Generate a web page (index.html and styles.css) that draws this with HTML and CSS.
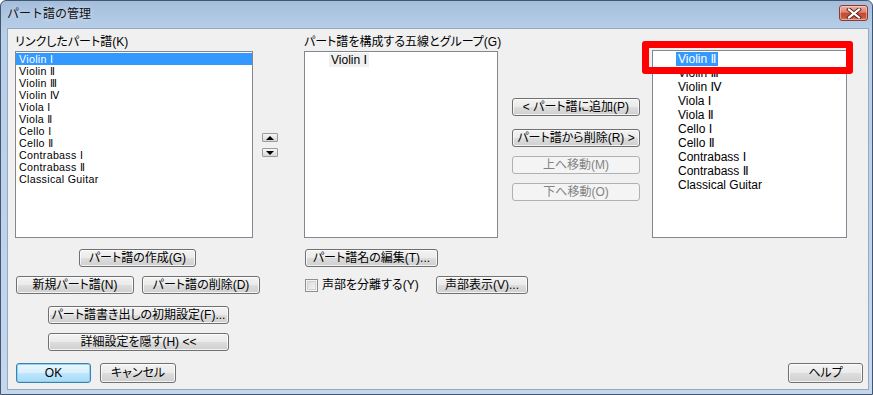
FILE: index.html
```html
<!DOCTYPE html>
<html lang="ja">
<head>
<meta charset="utf-8">
<title>パート譜の管理</title>
<link rel="stylesheet" href="styles.css">
</head>
<body>
<div class="window">
  <div class="titlebar">
    <span class="title">パート譜の管理</span>
    <div class="close">
      <svg width="16" height="11" viewBox="0 0 16 11">
        <path d="M3 1.5 L13 9.5 M13 1.5 L3 9.5" stroke="#5a2418" stroke-width="4" stroke-linecap="square" fill="none"/>
        <path d="M3 1.5 L13 9.5 M13 1.5 L3 9.5" stroke="#ffffff" stroke-width="2.2" stroke-linecap="square" fill="none"/>
      </svg>
    </div>
  </div>
  <div class="client">
    <div class="top">
      <div class="col-left">
        <div class="label">リンクしたパート譜(K)</div>
        <ul class="list list-left">
          <li class="sel">Violin <span class="rn">Ⅰ</span></li>
          <li>Violin <span class="rn">Ⅱ</span></li>
          <li>Violin <span class="rn">Ⅲ</span></li>
          <li>Violin <span class="rn">Ⅳ</span></li>
          <li>Viola <span class="rn">Ⅰ</span></li>
          <li>Viola <span class="rn">Ⅱ</span></li>
          <li>Cello <span class="rn">Ⅰ</span></li>
          <li>Cello <span class="rn">Ⅱ</span></li>
          <li>Contrabass <span class="rn">Ⅰ</span></li>
          <li>Contrabass <span class="rn">Ⅱ</span></li>
          <li>Classical Guitar</li>
        </ul>
      </div>
      <div class="updown">
        <span class="tiny up"></span>
        <span class="tiny down"></span>
      </div>
      <div class="col-mid">
        <div class="label">パート譜を構成する五線とグループ(G)</div>
        <ul class="list list-mid">
          <li><span class="inactive">Violin Ⅰ</span></li>
        </ul>
      </div>
      <div class="col-btns">
        <div class="btn add">&lt; パート譜に追加(P)</div>
        <div class="btn remove">パート譜から削除(R) &gt;</div>
        <div class="btn disabled move">上へ移動(M)</div>
        <div class="btn disabled move">下へ移動(O)</div>
      </div>
      <div class="col-right">
        <ul class="list list-right">
          <li><span class="sel">Violin Ⅱ</span></li>
          <li><span>Violin Ⅲ</span></li>
          <li><span>Violin Ⅳ</span></li>
          <li><span>Viola Ⅰ</span></li>
          <li><span>Viola Ⅱ</span></li>
          <li><span>Cello Ⅰ</span></li>
          <li><span>Cello Ⅱ</span></li>
          <li><span>Contrabass Ⅰ</span></li>
          <li><span>Contrabass Ⅱ</span></li>
          <li><span>Classical Guitar</span></li>
        </ul>
        <div class="mark"></div>
      </div>
    </div>
    <div class="bottom">
      <div class="left-actions">
        <div class="row r1"><div class="btn w117">パート譜の作成(G)</div></div>
        <div class="row r2"><div class="btn w118">新規パート譜(N)</div><div class="btn w118">パート譜の削除(D)</div></div>
        <div class="row r3"><div class="btn w181">パート譜書き出しの初期設定(F)...</div></div>
        <div class="row r4"><div class="btn w181">詳細設定を隠す(H) &lt;&lt;</div></div>
      </div>
      <div class="mid-actions">
        <div class="row"><div class="btn w133">パート譜名の編集(T)...</div></div>
        <div class="row r2 split">
          <label class="check"><span class="box"></span><span>声部を分離する(Y)</span></label>
          <div class="btn w92">声部表示(V)...</div>
        </div>
      </div>
    </div>
    <div class="footer">
      <div class="btn default w75 tall">OK</div>
      <div class="btn w76 tall cancel">キャンセル</div>
      <div class="btn w75 tall help">ヘルプ</div>
    </div>
  </div>
</div>
</body>
</html>
```
FILE: styles.css
```css
* { box-sizing: border-box; }
html, body { margin: 0; padding: 0; }
body {
  width: 873px;
  height: 395px;
  overflow: hidden;
  background: #ffffff;
  font-family: "Liberation Sans", "DejaVu Sans", "Noto Sans CJK JP", sans-serif;
  font-size: 12px;
  font-feature-settings: "palt";
  color: #000;
}

.window {
  width: 873px;
  height: 395px;
  border: 1px solid #44566e;
  border-radius: 6px 6px 0 0;
  background: linear-gradient(#a3bddc 0, #b7cee8 27px, #c4d7ed 100%);
  padding: 0 3px 4px 6px;
  display: flex;
  flex-direction: column;
}

.titlebar {
  height: 27px;
  display: flex;
  align-items: flex-start;
  justify-content: space-between;
  flex: none;
}
.title {
  margin-top: 6px;
  line-height: 14px;
  font-feature-settings: normal;
  color: #111;
  text-shadow: 0 0 6px rgba(255,255,255,0.7);
}
.close {
  margin-top: 4px;
  margin-right: 1px;
  width: 29px;
  height: 16px;
  border: 1px solid #8d3b2f;
  border-radius: 3px;
  background: linear-gradient(#eab2a5 0%, #dc8573 45%, #c54a35 50%, #c8543f 80%, #d9826a 100%);
  box-shadow: inset 0 0 0 1px rgba(255,220,210,0.5);
  display: flex;
  align-items: center;
  justify-content: center;
}

.client {
  flex: 1;
  background: #f0f0f0;
  border: 1px solid #97a9c0;
  display: flex;
  flex-direction: column;
}

.top {
  display: flex;
  align-items: flex-start;
}

.label {
  height: 14px;
  line-height: 14px;
  margin-top: 6px;
  margin-bottom: 2px;
  white-space: nowrap;
}

.list {
  list-style: none;
  margin: 0;
  padding: 1px 0 0 0;
  height: 187px;
  border: 1px solid #828790;
  background: #ffffff;
  overflow: hidden;
}

.col-left { margin-left: 7px; width: 238px; }
.list-left li {
  height: 12px;
  line-height: 12px;
  padding-left: 3px;
  white-space: nowrap;
  font-size: 10.7px;
  letter-spacing: 0.3px;
}
.list-left .rn { font-size: 10px; }
.list-left li.sel { background: #3399ff; color: #fff; }

.updown {
  margin-left: 9px;
  width: 16px;
  padding-top: 104px;
  display: flex;
  flex-direction: column;
  gap: 6px;
}
.tiny {
  display: flex;
  align-items: center;
  justify-content: center;
  width: 16px;
  height: 9px;
  border: 1px solid #9b9b9b;
  border-radius: 1px;
  background: linear-gradient(#f6f6f6, #d8d8d8);
}
.tiny::before {
  content: "";
  width: 0;
  height: 0;
  border-left: 4px solid transparent;
  border-right: 4px solid transparent;
}
.up::before { border-bottom: 4px solid #000; }
.down::before { border-top: 4px solid #000; }

.col-mid { margin-left: 26px; width: 194px; }
.list-mid li {
  height: 14px;
  line-height: 14px;
  padding-left: 24px;
  white-space: nowrap;
}
.inactive { background: #f0f0f0; padding: 0 2px; }

.col-btns {
  margin-left: 14px;
  width: 128px;
  padding-top: 69px;
  display: flex;
  flex-direction: column;
}
.col-btns .btn { width: 128px; }
.col-btns .remove { margin-top: 13px; }
.col-btns .move { margin-top: 9px; }

.col-right {
  margin-left: 12px;
  width: 195px;
  padding-top: 21px;
  position: relative;
}
.list-right { height: 188px; }
.list-right li {
  height: 14px;
  line-height: 14px;
  padding-left: 23px;
  white-space: nowrap;
}
.list-right li span { padding: 0 2px; }
.list-right li span.sel { background: #3399ff; color: #fff; }

.mark {
  position: absolute;
  left: -10px;
  top: 12px;
  width: 211px;
  height: 33px;
  border: 7px solid #ff0000;
  border-radius: 3px;
}

.btn {
  display: flex;
  align-items: center;
  justify-content: center;
  height: 18px;
  line-height: 16px;
  border: 1px solid #707070;
  border-radius: 3px;
  background: linear-gradient(#f3f3f3 0%, #ebebeb 48%, #dddddd 52%, #cfcfcf 100%);
  box-shadow: inset 0 0 0 1px rgba(255,255,255,0.75);
  white-space: nowrap;
  flex: none;
}
.btn.disabled {
  border-color: #adb2b5;
  background: #f4f4f4;
  color: #838383;
  box-shadow: none;
}
.btn.default {
  border-color: #3c7fb1;
  box-shadow: inset 0 0 0 1px #8fd3f2;
  background: linear-gradient(#eaf6fd 0%, #d9f0fc 48%, #bee6fd 52%, #a7d9f5 100%);
}
.btn.tall { height: 20px; }

.w75 { width: 75px; }
.w76 { width: 76px; }
.w92 { width: 92px; }
.w117 { width: 117px; }
.w118 { width: 118px; }
.w133 { width: 133px; }
.w181 { width: 181px; }

.bottom {
  display: flex;
  align-items: flex-start;
  margin-top: 11px;
}
.left-actions {
  margin-left: 8px;
  width: 244px;
}
.row { display: flex; align-items: center; }
.left-actions .r1 { padding-left: 63px; }
.left-actions .r2 { margin-top: 9px; gap: 8px; }
.left-actions .r3 { margin-top: 12px; padding-left: 32px; }
.left-actions .r4 { margin-top: 9px; padding-left: 32px; }

.mid-actions { margin-left: 45px; }
.mid-actions .r2 { margin-top: 9px; }
.split { width: 223px; justify-content: space-between; }
.check {
  display: flex;
  align-items: center;
  gap: 4px;
  line-height: 14px;
}
.box {
  display: block;
  width: 13px;
  height: 13px;
  border: 1px solid #8e8f8f;
  background: linear-gradient(135deg, #d8d8d8, #f7f7f7);
  box-shadow: inset 0 0 0 1px #f4f4f4, inset 0 0 0 2px #d2d2d2;
}

.footer {
  margin-top: 12px;
  display: flex;
  padding-left: 8px;
  padding-right: 5px;
}
.cancel { margin-left: 9px; }
.help { margin-left: auto; }
```
